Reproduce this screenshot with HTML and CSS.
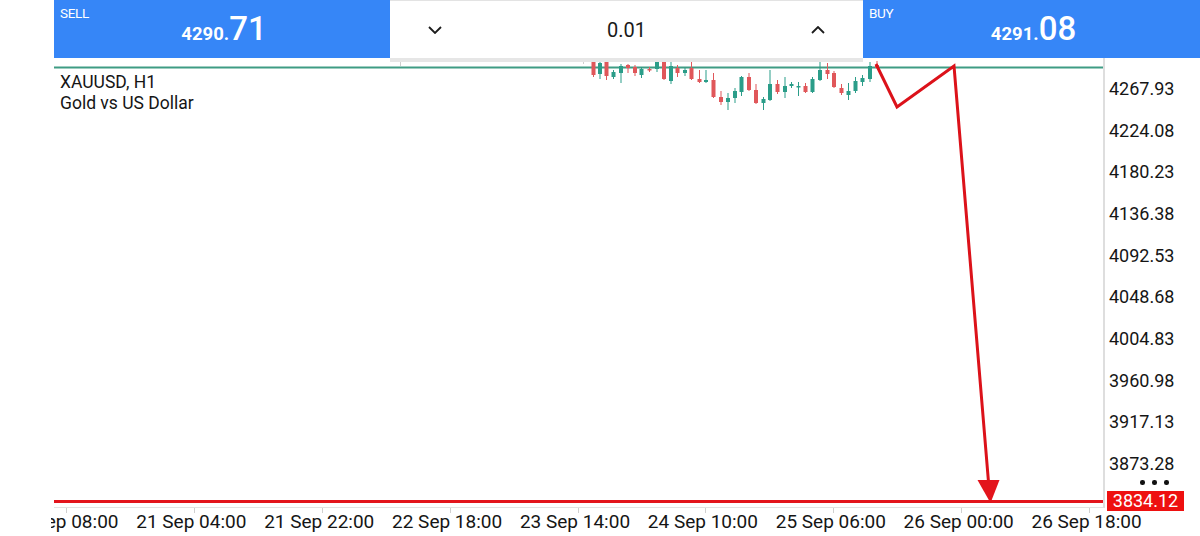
FILE: index.html
```html
<!DOCTYPE html>
<html>
<head>
<meta charset="utf-8">
<link rel="stylesheet" href="styles.css">
</head>
<body>
<div class="app">
  <div class="topbar">
    <div class="side">
      <div class="tag">SELL</div>
      <div class="price"><span class="small">4290.</span>71</div>
    </div>
    <div class="mid">
      <svg class="chev" width="14" height="8" viewBox="0 0 14 8"><path d="M1 1 L7 7 L13 1" fill="none" stroke="#1c1c1c" stroke-width="1.8"/></svg>
      <div class="lot">0.01</div>
      <svg class="chev" width="14" height="8" viewBox="0 0 14 8"><path d="M1 7 L7 1 L13 7" fill="none" stroke="#1c1c1c" stroke-width="1.8"/></svg>
    </div>
    <div class="side">
      <div class="tag">BUY</div>
      <div class="price"><span class="small">4291.</span>08</div>
    </div>
  </div>

  <div class="chart">
    <div class="plot">
      <svg class="canvas" width="1049" height="449" viewBox="54 58 1049 449">
        <rect x="400" y="60" width="1" height="6" fill="#cfcfcf"/>
        <rect x="583" y="61" width="1" height="3" fill="#cfcfcf"/>
        <rect x="54" y="66.5" width="1049" height="2" fill="#3f9c84"/>
        <g fill="#e0575a">
          <rect x="593" y="58" width="1" height="19"/><rect x="591.5" y="58" width="4" height="17"/>
          <rect x="606" y="58" width="1" height="22"/><rect x="604.5" y="58" width="4" height="18"/>
          <rect x="627.5" y="64" width="1" height="9"/><rect x="626" y="65" width="4" height="3"/>
          <rect x="634.5" y="65" width="1" height="11"/><rect x="633" y="67" width="4" height="6"/>
          <rect x="649" y="67" width="1" height="5"/><rect x="647.5" y="69" width="4" height="1.5"/>
          <rect x="663.5" y="58" width="1" height="22"/><rect x="662" y="58" width="4" height="21"/>
          <rect x="677" y="65" width="1" height="12"/><rect x="675.5" y="68" width="4" height="5"/>
          <rect x="691" y="62" width="1" height="18"/><rect x="689.5" y="68" width="4" height="11"/>
          <rect x="699" y="70" width="1" height="13"/><rect x="697.5" y="79" width="4" height="3"/>
          <rect x="713" y="73" width="1" height="25"/><rect x="711.5" y="80" width="4" height="17"/>
          <rect x="720.5" y="91" width="1" height="14"/><rect x="719" y="97" width="4" height="5"/>
          <rect x="748.5" y="73" width="1" height="18"/><rect x="747" y="77" width="4" height="13"/>
          <rect x="755.5" y="84" width="1" height="20"/><rect x="754" y="90" width="4" height="13"/>
          <rect x="777" y="80" width="1" height="14"/><rect x="775.5" y="84" width="4" height="8"/>
          <rect x="805" y="83" width="1" height="10"/><rect x="803.5" y="86" width="4" height="6"/>
          <rect x="827" y="63" width="1" height="16"/><rect x="825.5" y="70" width="4" height="4"/>
          <rect x="833.5" y="71" width="1" height="17"/><rect x="832" y="73" width="4" height="14"/>
          <rect x="841" y="84" width="1" height="11"/><rect x="839.5" y="88" width="4" height="5"/>
          <rect x="876.5" y="61" width="1" height="7"/><rect x="875" y="65" width="4" height="3"/>
        </g>
        <g fill="#2b9d89">
          <rect x="599.5" y="61" width="1" height="18"/><rect x="598" y="63" width="4" height="11"/>
          <rect x="613" y="70" width="1" height="9"/><rect x="611.5" y="72" width="4" height="5"/>
          <rect x="620.5" y="64" width="1" height="19"/><rect x="619" y="66" width="4" height="7"/>
          <rect x="641" y="67" width="1" height="11"/><rect x="639.5" y="69" width="4" height="6"/>
          <rect x="656.5" y="58" width="1" height="14"/><rect x="655" y="62" width="4" height="7"/>
          <rect x="670.5" y="62" width="1" height="22"/><rect x="669" y="66" width="4" height="15"/>
          <rect x="684.5" y="68" width="1" height="8"/><rect x="683" y="70" width="4" height="3"/>
          <rect x="705.5" y="70" width="1" height="13"/><rect x="704" y="80" width="4" height="2"/>
          <rect x="727.5" y="93" width="1" height="17"/><rect x="726" y="98" width="4" height="4"/>
          <rect x="734.5" y="88" width="1" height="15"/><rect x="733" y="91" width="4" height="7"/>
          <rect x="741" y="76" width="1" height="20"/><rect x="739.5" y="77" width="4" height="15"/>
          <rect x="763" y="97" width="1" height="13"/><rect x="761.5" y="99" width="4" height="4"/>
          <rect x="769.5" y="70" width="1" height="31"/><rect x="768" y="84" width="4" height="16"/>
          <rect x="784.5" y="77" width="1" height="21"/><rect x="783" y="86" width="4" height="6"/>
          <rect x="791" y="82" width="1" height="6"/><rect x="789.5" y="84" width="4" height="2"/>
          <rect x="798" y="82" width="1" height="14"/><rect x="796.5" y="86" width="4" height="1.5"/>
          <rect x="812" y="77" width="1" height="16"/><rect x="810.5" y="79" width="4" height="13"/>
          <rect x="819.5" y="62" width="1" height="19"/><rect x="818" y="70" width="4" height="10"/>
          <rect x="848" y="83" width="1" height="17"/><rect x="846.5" y="91" width="4" height="4"/>
          <rect x="855" y="77" width="1" height="16"/><rect x="853.5" y="81" width="4" height="10"/>
          <rect x="862" y="75" width="1" height="11"/><rect x="860.5" y="78" width="4" height="4"/>
          <rect x="869.5" y="62" width="1" height="20"/><rect x="868" y="66" width="4" height="13"/>
        </g>
        <rect x="54" y="500" width="1049" height="3" fill="#e3141c"/>
        <polyline points="876,64 897,107 954,66 988.5,482" fill="none" stroke="#dc121a" stroke-width="3" stroke-linejoin="miter"/>
        <polygon points="977.5,480 999.5,480 990.5,503" fill="#e3141c"/>
      </svg>
      <div class="legend">
        <div>XAUUSD, H1</div>
        <div>Gold vs US Dollar</div>
      </div>
    </div>
    <div class="axis">
      <div class="plabel">4267.93</div>
      <div class="plabel">4224.08</div>
      <div class="plabel">4180.23</div>
      <div class="plabel">4136.38</div>
      <div class="plabel">4092.53</div>
      <div class="plabel">4048.68</div>
      <div class="plabel">4004.83</div>
      <div class="plabel">3960.98</div>
      <div class="plabel">3917.13</div>
      <div class="plabel">3873.28</div>
      <div class="dots"><span></span><span></span><span></span></div>
      <div class="curtag">3834.12</div>
    </div>
  </div>

  <div class="timeaxis">
    <div class="ttrack">
      <div class="tlabel">20 Sep 08:00</div>
      <div class="tlabel">21 Sep 04:00</div>
      <div class="tlabel">21 Sep 22:00</div>
      <div class="tlabel">22 Sep 18:00</div>
      <div class="tlabel">23 Sep 14:00</div>
      <div class="tlabel">24 Sep 10:00</div>
      <div class="tlabel">25 Sep 06:00</div>
      <div class="tlabel">26 Sep 00:00</div>
      <div class="tlabel">26 Sep 18:00</div>
    </div>
  </div>
</div>
</body>
</html>
```
FILE: styles.css
```css
html, body {
  margin: 0;
  padding: 0;
  background: #ffffff;
}
body {
  font-family: Roboto, "Noto Sans", sans-serif;
  color: #1a1a1a;
  overflow: hidden;
}
.app {
  width: 1200px;
  height: 536px;
  background: #ffffff;
}

/* top trade bar */
.topbar {
  display: flex;
  align-items: flex-start;
  height: 58px;
  padding-left: 54px;
  position: relative;
  z-index: 3;
}
.side {
  width: 336px;
  height: 58px;
  box-sizing: border-box;
  padding: 6px 6px 0 6px;
  background: #3686f7;
  color: #ffffff;
}
.side:last-child {
  width: 337px;
}
.tag {
  font-size: 13.5px;
  line-height: 15px;
  letter-spacing: -0.3px;
}
.price {
  margin-top: -7px;
  text-align: center;
  font-size: 33px;
  line-height: 30px;
  font-weight: 500;
  padding-left: 4px;
}
.small {
  font-size: 18.5px;
  font-weight: 700;
}
.mid {
  width: 473px;
  height: 62px;
  box-sizing: border-box;
  border-top: 1px solid #e3e3e3;
  border-bottom: 4px solid #e6e6e6;
  background: #ffffff;
  display: flex;
  align-items: center;
  justify-content: space-between;
  padding: 0 38px 0 38px;
}
.chev {
  display: block;
}
.lot {
  font-size: 20px;
  color: #1a1a1a;
}

/* chart */
.chart {
  display: flex;
  height: 450px;
}
.plot {
  position: relative;
  width: 1049px;
  height: 449px;
  margin-left: 54px;
  border-right: 2px solid #dedede;
  border-bottom: 1px solid #e2e2e2;
  overflow: hidden;
}
.canvas {
  display: block;
}
.legend {
  position: absolute;
  left: 6px;
  top: 14px;
  font-size: 17.5px;
  line-height: 21px;
  color: #151515;
}
.axis {
  position: relative;
  flex: 1;
  padding-top: 10px;
  padding-left: 4px;
}
.plabel {
  font-size: 18px;
  line-height: 41.67px;
  height: 41.67px;
  color: #151515;
}
.dots {
  position: absolute;
  left: 35px;
  top: 422px;
  display: flex;
  gap: 7.5px;
}
.dots span {
  width: 4.5px;
  height: 4.5px;
  border-radius: 50%;
  background: #111111;
}
.curtag {
  position: absolute;
  left: 2px;
  top: 433px;
  width: 77px;
  height: 20px;
  background: #ee1010;
  color: #ffffff;
  font-size: 18px;
  line-height: 20px;
  text-align: center;
  z-index: 2;
}

/* time axis */
.timeaxis {
  height: 28px;
  margin-left: 51px;
  overflow: hidden;
}
.ttrack {
  display: flex;
  margin-left: -48.5px;
}
.tlabel {
  position: relative;
  flex: 0 0 127.9px;
  box-sizing: border-box;
  padding-right: 6px;
  text-align: center;
  white-space: nowrap;
  font-size: 19px;
  line-height: 28px;
  color: #151515;
}
.tlabel::before {
  content: "";
  position: absolute;
  left: 63.5px;
  top: 0;
  width: 1px;
  height: 5px;
  background: #d0d0d0;
}
```
